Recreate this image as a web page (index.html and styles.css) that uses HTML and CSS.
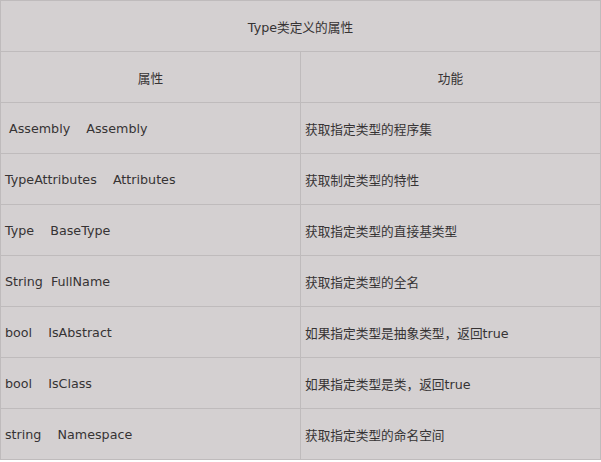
FILE: index.html
```html
<!DOCTYPE html>
<html lang="zh-CN">
<head>
<meta charset="utf-8">
<title>Type类定义的属性</title>
<link rel="stylesheet" href="styles.css">
</head>
<body>
<table class="props">
  <tr><td class="title" colspan="2">Type类定义的属性</td></tr>
  <tr><td class="head">属性</td><td class="head">功能</td></tr>
  <tr><td class="name"> Assembly    Assembly</td><td>获取指定类型的程序集</td></tr>
  <tr><td class="name">TypeAttributes    Attributes</td><td>获取制定类型的特性</td></tr>
  <tr><td class="name">Type    BaseType</td><td>获取指定类型的直接基类型</td></tr>
  <tr><td class="name">String  FullName</td><td>获取指定类型的全名</td></tr>
  <tr><td class="name">bool    IsAbstract</td><td>如果指定类型是抽象类型，返回true</td></tr>
  <tr><td class="name">bool    IsClass</td><td>如果指定类型是类，返回true</td></tr>
  <tr><td class="name">string    Namespace</td><td>获取指定类型的命名空间</td></tr>
</table>
</body>
</html>
```
FILE: styles.css
```css
html, body {
  margin: 0;
  padding: 0;
  background: #ffffff;
}
.props {
  border-collapse: collapse;
  width: 601px;
  table-layout: fixed;
  background: #d4d0d1;
  font-family: "DejaVu Sans", Verdana, "Noto Sans CJK SC", sans-serif;
  font-size: 12.7px;
  color: #363334;
}
.props td {
  border: 1px solid #bfbbbc;
  height: 51px;
  padding: 0 4px;
  box-sizing: border-box;
  vertical-align: middle;
  white-space: pre;
}
.props td:first-child {
  width: 301px;
}
.props .title,
.props .head {
  text-align: center;
}
```
